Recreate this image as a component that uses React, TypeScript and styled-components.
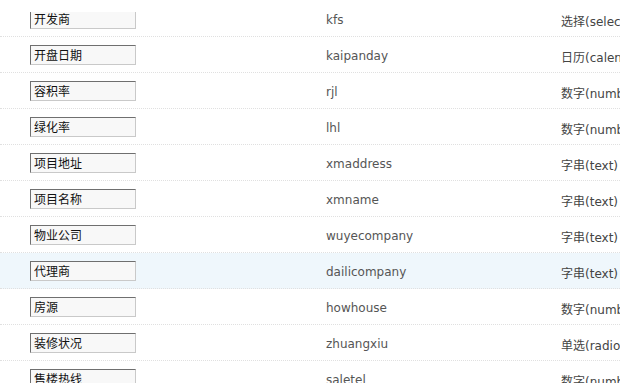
import * as React from 'react';
import styled, { createGlobalStyle } from 'styled-components';

const GlobalStyle = createGlobalStyle`
  html, body {
    margin: 0;
    padding: 0;
    background: #fff;
    overflow: hidden;
  }
`;

const Viewport = styled.div`
  width: 620px;
  height: 383px;
  overflow: hidden;
  background: #fff;
`;

const ScrollArea = styled.div`
  margin-top: 12px;
  height: 371px;
  overflow: hidden;
`;

const FieldList = styled.div`
  width: 720px;
  margin-top: -11px;
  display: flex;
  flex-direction: column;
`;

const Row = styled.div<{ active?: boolean }>`
  display: grid;
  grid-template-columns: 326px 235px 1fr;
  align-items: center;
  height: 35px;
  border-bottom: 1px dotted #e0e0e0;
  background: ${(props) => (props.active ? '#eff7fc' : '#fff')};
`;

const NameInput = styled.input`
  box-sizing: border-box;
  margin: 0 0 0 30px;
  width: 106px;
  height: 20px;
  padding: 0 3px;
  border-style: solid;
  border-width: 1px;
  border-color: #6f6f6f #c9c9c9 #c9c9c9 #6f6f6f;
  background: #f8f8f8;
  color: #111;
  font-family: 'Noto Sans CJK SC', 'DejaVu Sans', sans-serif;
  font-size: 12px;
  line-height: 18px;
  outline: none;
`;

const Key = styled.span`
  padding-top: 3px;
  color: #555;
  font-family: 'DejaVu Sans', 'Noto Sans CJK SC', sans-serif;
  font-size: 12px;
  white-space: nowrap;
`;

const Kind = styled(Key)`
  color: #444;
`;

const fields = [
  { name: '开发商', key: 'kfs', kind: '选择(select)' },
  { name: '开盘日期', key: 'kaipanday', kind: '日历(calendar)' },
  { name: '容积率', key: 'rjl', kind: '数字(number)' },
  { name: '绿化率', key: 'lhl', kind: '数字(number)' },
  { name: '项目地址', key: 'xmaddress', kind: '字串(text)' },
  { name: '项目名称', key: 'xmname', kind: '字串(text)' },
  { name: '物业公司', key: 'wuyecompany', kind: '字串(text)' },
  { name: '代理商', key: 'dailicompany', kind: '字串(text)' },
  { name: '房源', key: 'howhouse', kind: '数字(number)' },
  { name: '装修状况', key: 'zhuangxiu', kind: '单选(radio)' },
  { name: '售楼热线', key: 'saletel', kind: '数字(number)' },
];

const App = () => {
  return (
    <Viewport>
      <GlobalStyle />
      <ScrollArea>
        <FieldList>
          {fields.map((f) => (
            <Row key={f.key} active={f.key === 'dailicompany'}>
              <div>
                <NameInput type='text' defaultValue={f.name} />
              </div>
              <Key>{f.key}</Key>
              <Kind>{f.kind}</Kind>
            </Row>
          ))}
        </FieldList>
      </ScrollArea>
    </Viewport>
  );
};

export default App;
